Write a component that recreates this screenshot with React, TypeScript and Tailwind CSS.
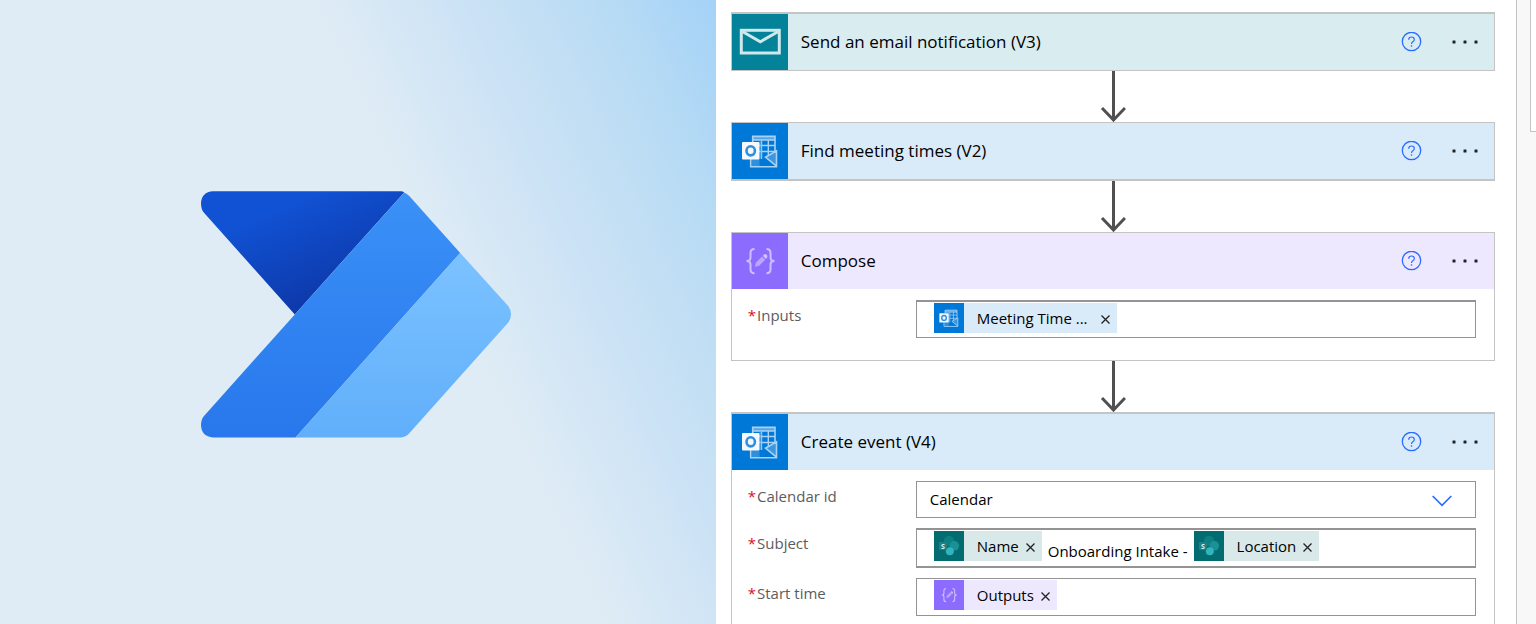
import type { ReactNode } from "react";

type IconProps = { className: string };

function PowerAutomateLogo() {
  return (
    <svg viewBox="0 0 312 248" className="w-[312px] max-w-full" role="img" aria-label="Power Automate">
      <defs>
        <linearGradient id="dark" x1="70" y1="20" x2="115" y2="125" gradientUnits="userSpaceOnUse">
          <stop offset="0" stopColor="#1152d4" />
          <stop offset="1" stopColor="#0d36a6" />
        </linearGradient>
        <linearGradient id="mid" x1="0" y1="0" x2="0" y2="1">
          <stop offset="0" stopColor="#3b91f7" />
          <stop offset="1" stopColor="#2877ec" />
        </linearGradient>
        <linearGradient id="light" x1="0" y1="0" x2="0" y2="1">
          <stop offset="0" stopColor="#7bc2ff" />
          <stop offset="1" stopColor="#61affb" />
        </linearGradient>
      </defs>
      <path d="M13 1.2H201Q203 1.3 204.2 2.4L94.8 124.4L4 22.8Q1 19.5 1 13.2Q1.5 2 13 1.2Z" fill="url(#dark)" />
      <path d="M204.2 2.4Q207 3.5 209.3 6L260.2 62.9L95.5 247.4H13Q1.5 246.5 1 235.5Q1 229.5 4 226.1L94.8 124.4Z" fill="url(#mid)" />
      <path d="M260.2 62.9L308 115.8Q311 119.5 311 124.5Q311 129 308 132.8L209.5 243Q205.5 247.3 201 247.4H95.5Z" fill="url(#light)" />
    </svg>
  );
}

function MailIcon({ className }: IconProps) {
  return (
    <svg viewBox="0 0 56 56" className={className} aria-hidden="true">
      <rect width="56" height="56" fill="#038299" />
      <g fill="none" stroke="#cfe8ec" strokeWidth="3">
        <rect x="9.3" y="16.3" width="38" height="22.7" />
        <path d="M9.5 17L28.3 27.8L47.2 17" />
      </g>
    </svg>
  );
}

function OutlookIcon({ className }: IconProps) {
  return (
    <svg viewBox="0 0 56 56" className={className} aria-hidden="true">
      <rect width="56" height="56" fill="#0078d7" />
      <g fill="none" stroke="#a9d2f3" strokeWidth="1.6">
        <path d="M20.7 19V13.4H43V30M20.7 17H43" />
        <path d="M29.5 17V36M36.3 17V32M27 22.5H43M27 28.5H43" strokeWidth="1.4" />
        <path d="M18.7 36V43.7H44.5V27.8L33.5 34.2L44.5 43.2" />
      </g>
      <path d="M20.7 13.4H43V17H20.7Z" fill="#a9d2f3" fillOpacity="0.5" />
      <path d="M33.5 34.2L44.5 27.8V43.2Z" fill="#a9d2f3" fillOpacity="0.35" />
      <path d="M27.5 17H29.5V36H20V43H27.5Z" fill="#5aa8e6" fillOpacity="0.5" />
      <rect x="10" y="19" width="17.5" height="17.5" rx="1" fill="#f3f9fe" />
      <ellipse cx="18.7" cy="27.8" rx="4.2" ry="4.6" fill="none" stroke="#2f8fdf" strokeWidth="2.6" />
    </svg>
  );
}

function ComposeIcon({ className }: IconProps) {
  return (
    <svg viewBox="0 0 56 56" className={className} aria-hidden="true">
      <rect width="56" height="56" fill="#8c6cff" />
      <g fill="none" stroke="#cdc0ff" strokeWidth="2">
        <path d="M22.5 16Q18.5 16 18.5 20V24.5Q18.5 28 14.5 28Q18.5 28 18.5 31.5V36.5Q18.5 40.3 22.5 40.3" />
        <path d="M34.5 16Q38.5 16 38.5 20V24.5Q38.5 28 42.5 28Q38.5 28 38.5 31.5V36.5Q38.5 40.3 34.5 40.3" />
      </g>
      <path d="M22.8 33.8L24 29.5L30 23.5L33.2 26.7L27.2 32.7Z" fill="#b9a6ff" />
      <path d="M30.8 22.7L32 21.5Q33.5 20.5 34.7 21.8Q36 23.2 35 24.7L33.9 25.9Z" fill="#cfc3ff" />
    </svg>
  );
}

function SharePointIcon({ className }: IconProps) {
  return (
    <svg viewBox="0 0 30 30" className={className} aria-hidden="true">
      <rect width="30" height="30" fill="#036c70" />
      <circle cx="15" cy="10" r="5.2" fill="#0b7f83" />
      <circle cx="20.3" cy="14.8" r="4.8" fill="#1a9196" />
      <circle cx="15.8" cy="20.3" r="4" fill="#2fb5bd" />
      <rect x="5" y="11" width="8" height="8" rx="0.8" fill="#1a8286" />
      <text x="9" y="17.6" fontSize="7" fontWeight="700" textAnchor="middle" fill="#d8efef" fontFamily="Open Sans, sans-serif">
        S
      </text>
    </svg>
  );
}

function Arrow() {
  return (
    <svg viewBox="0 0 26 51" className="block h-[51px] w-[26px] shrink-0 self-center" aria-hidden="true">
      <path d="M13.5 0V49M2 37L13.5 49L25 37" fill="none" stroke="#505050" strokeWidth="3" />
    </svg>
  );
}

function HelpButton() {
  return (
    <button type="button" aria-label="Help" className="cursor-pointer">
      <svg viewBox="0 0 21 21" className="block size-[21px]" fill="none" stroke="#2a6cff" aria-hidden="true">
        <circle cx="10.5" cy="9.5" r="9.2" strokeWidth="1.3" />
        <path d="M7.700 7.700Q7.700 5 10.500 5Q13.300 5 13.300 7.400Q13.300 8.800 11.800 9.800Q10.500 10.700 10.500 12" strokeWidth="1.2" />
        <path d="M10.5 13.300V14.700" strokeWidth="1.4" />
      </svg>
    </button>
  );
}

function MoreButton() {
  return (
    <button type="button" aria-label="More options" className="cursor-pointer">
      <svg viewBox="0 0 26 21" className="block h-[21px] w-[26px]" fill="#222" aria-hidden="true">
        <rect x="0.5" y="8.5" width="3" height="3" rx="0.5" />
        <rect x="11.5" y="8.5" width="3" height="3" rx="0.5" />
        <rect x="22.5" y="8.5" width="3" height="3" rx="0.5" />
      </svg>
    </button>
  );
}

type CardProps = {
  title: string;
  icon: ReactNode;
  tint: string;
  borders: string;
  children?: ReactNode;
};

function Card({ title, icon, tint, borders, children }: CardProps) {
  return (
    <article className={`border-x border-[#c4c4c4] bg-white ${borders}`}>
      <header className={`flex items-center ${tint}`}>
        {icon}
        <h2 className="ml-[13px] flex-1 text-[17px] leading-6 text-black">{title}</h2>
        <div className="mr-4 flex items-center gap-[30px]">
          <HelpButton />
          <MoreButton />
        </div>
      </header>
      {children}
    </article>
  );
}

function Field({ id, label, children }: { id: string; label: string; children: ReactNode }) {
  return (
    <div className="flex items-start">
      <label htmlFor={id} className="w-[168px] shrink-0 pt-[5px] text-[15px] leading-5 text-[#5c5c5c]">
        <span className="mr-px text-[#e00b1c]">*</span>
        {label}
      </label>
      {children}
    </div>
  );
}

type TokenProps = { label: string; icon: ReactNode; tint: string; gap?: string };

function Token({ label, icon, tint, gap = "ml-1.5" }: TokenProps) {
  return (
    <span className={`flex h-[30px] shrink-0 items-center pr-1.5 ${tint}`}>
      {icon}
      <span className="ml-[13px] text-[15px] leading-5 text-black">{label}</span>
      <button type="button" aria-label={`Remove ${label}`} className={`cursor-pointer ${gap}`}>
        <svg viewBox="0 0 11 11" className="mt-0.5 block size-[11px]" aria-hidden="true">
          <path d="M1.5 1.5L9.5 9.5M9.5 1.5L1.5 9.5" stroke="#222" strokeWidth="1.3" />
        </svg>
      </button>
    </span>
  );
}

function TokenBox({ id, borders, children }: { id: string; borders: string; children: ReactNode }) {
  return (
    <div className={`flex min-w-0 flex-1 items-start border-x border-[#949494] pl-[17px] ${borders}`}>
      {children}
      <input id={id} type="text" className="h-[30px] min-w-0 flex-1 bg-transparent px-2 text-[15px] outline-none" />
    </div>
  );
}

export default function App() {
  return (
    <main className="flex min-h-screen bg-white font-['Open_Sans','Noto_Sans',sans-serif]">
      <section className="flex w-[46.6%] shrink-0 items-center justify-center bg-[linear-gradient(65deg,#dfecf5_0%,#dfecf5_60%,#cbe2f5_75%,#b9dcf4_88%,#a4d2f7_100%)] pt-1 pr-1">
        <PowerAutomateLogo />
      </section>

      <section className="flex min-w-0 flex-1 flex-col pt-3 pr-[21px] pl-[15px]">
        <Card
          title="Send an email notification (V3)"
          icon={<MailIcon className="size-14" />}
          tint="bg-[#d9ecef]"
          borders="border-t-2 border-b"
        />
        <Arrow />
        <Card
          title="Find meeting times (V2)"
          icon={<OutlookIcon className="size-14" />}
          tint="bg-[#d9eaf9]"
          borders="border-t border-b-2"
        />
        <Arrow />
        <Card
          title="Compose"
          icon={<ComposeIcon className="size-14" />}
          tint="bg-[#eee8ff]"
          borders="border-t border-b"
        >
          <div className="pt-[11px] pr-[18px] pb-[22px] pl-4">
            <Field id="inputs" label="Inputs">
              <TokenBox id="inputs" borders="border-t-2 border-b pt-px pb-1">
                <Token
                  label="Meeting Time ..."
                  icon={<OutlookIcon className="size-[30px]" />}
                  tint="bg-[#d9eaf9]"
                  gap="ml-3"
                />
              </TokenBox>
            </Field>
          </div>
        </Card>
        <Arrow />
        <Card
          title="Create event (V4)"
          icon={<OutlookIcon className="size-14" />}
          tint="bg-[#d9eaf9]"
          borders="flex-1 border-t-2"
        >
          <div className="flex flex-col gap-2.5 pt-[11px] pr-[18px] pb-2 pl-4">
            <Field id="calendar" label="Calendar id">
              <div className="relative min-w-0 flex-1">
                <select
                  id="calendar"
                  className="block h-[37px] w-full appearance-none border border-[#949494] bg-white px-[13px] text-[15px] text-black"
                >
                  <option>Calendar</option>
                </select>
                <svg viewBox="0 0 20 12" className="pointer-events-none absolute top-3.5 right-6 h-3 w-5" aria-hidden="true">
                  <path d="M0.7 1L10 10.300L19.300 1" fill="none" stroke="#2a6cff" strokeWidth="1.7" />
                </svg>
              </div>
            </Field>
            <Field id="subject" label="Subject">
              <TokenBox id="subject" borders="border-y-2 pt-px pb-[5px]">
                <Token label="Name" icon={<SharePointIcon className="size-[30px]" />} tint="bg-[#d9e9e9]" />
                <span className="mx-1.5 pt-2.5 text-[15px] leading-5 whitespace-nowrap text-black">Onboarding Intake -</span>
                <Token label="Location" icon={<SharePointIcon className="size-[30px]" />} tint="bg-[#d9e9e9]" />
              </TokenBox>
            </Field>
            <Field id="start" label="Start time">
              <TokenBox id="start" borders="border-y pt-px pb-[5px]">
                <Token label="Outputs" icon={<ComposeIcon className="size-[30px]" />} tint="bg-[#eee8ff]" />
              </TokenBox>
            </Field>
          </div>
        </Card>
      </section>

      <aside className="flex w-5 shrink-0 justify-end border-l border-[#c4c4c4] bg-[#f8f8f8]">
        <div className="h-[132px] w-1.5 border-b border-l border-[#c4c4c4] bg-white" />
      </aside>
    </main>
  );
}
